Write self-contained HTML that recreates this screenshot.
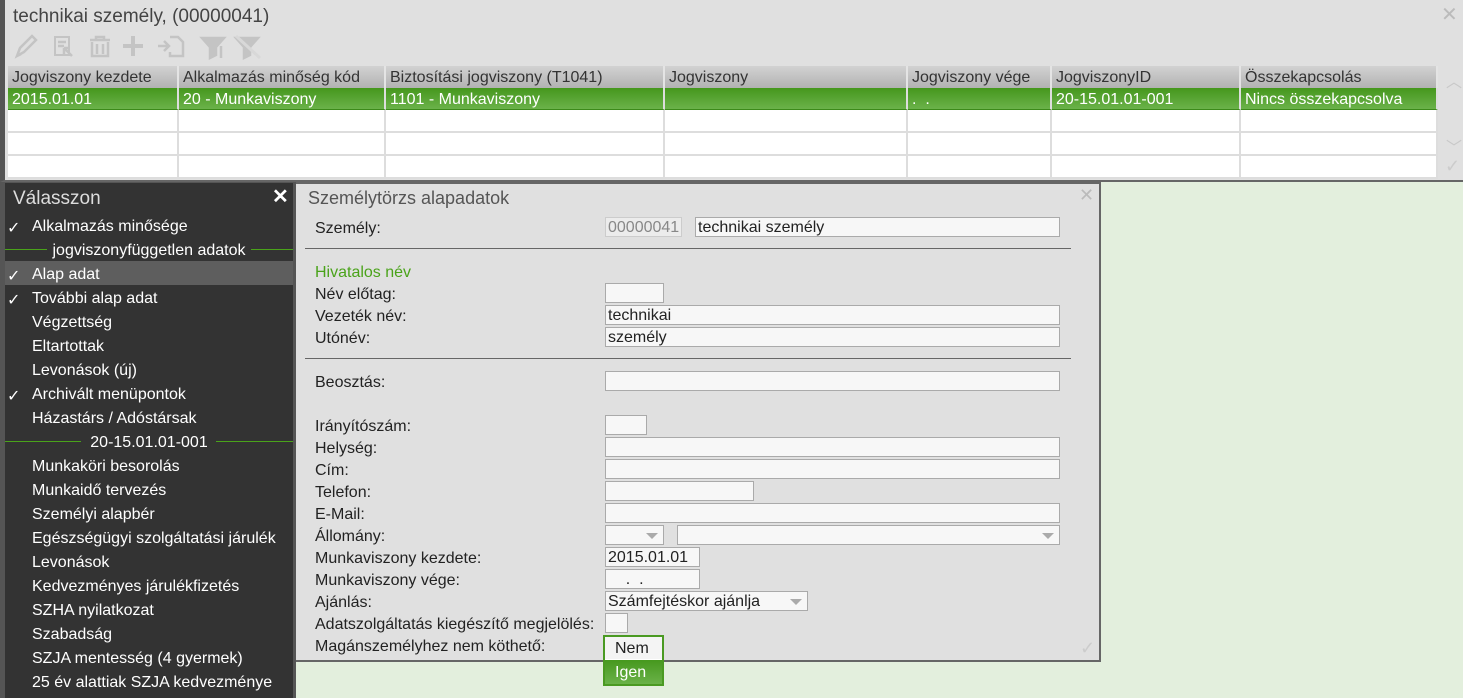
<!DOCTYPE html>
<html><head><meta charset="utf-8"><style>
*{margin:0;padding:0;box-sizing:border-box}
body{width:1463px;height:698px;overflow:hidden;background:#e3efdd;font-family:"Liberation Sans",sans-serif;font-size:16px;position:relative}
.a{position:absolute;white-space:nowrap}
#top{left:0;top:0;width:1463px;height:182px;background:#e0e0e0;border-left:5px solid #555;border-bottom:2px solid #666}
.hd{top:66px;height:22px;background:linear-gradient(#d2d2d2,#b2b2b2);color:#333;line-height:24px;padding-left:4px;border-right:2px solid #e4e4e4}
.rw{top:88px;height:22px;background:linear-gradient(#45971d,#6bb24a);color:#fff;line-height:24px;padding-left:4px;border-right:2px solid #ddd;border-bottom:1px solid #3c8a1a}
.em{height:23px;background:#fff;border-right:2px solid #ddd;border-bottom:2px solid #ddd}
#menu{left:0;top:182px;width:296px;height:516px;background:#555}
#mi{left:5px;top:1px;width:288px;height:515px;background:#333}
.mt{left:32px;color:#fff;font-size:16px;padding-top:2px}
.ck{left:7px;color:#fff;font-size:16px;padding-top:2px}
.sep{left:5px;width:288px;color:#fff;text-align:center;font-size:16px;padding-top:2px}
.gl{height:1px;background:#4aa31a}
#form{left:296px;top:182px;width:805px;height:480px;background:#e0e0e0;border:2px solid #666;border-left:none}
.lb{left:315px;color:#222;font-size:16px;padding-top:2px}
.in{background:#f7f7f7;border:1px solid #aaa;height:20px;font-size:16px;line-height:20px;padding-left:2px;color:#222}
.ar{position:absolute;right:5px;top:7px;width:0;height:0;border-left:6px solid transparent;border-right:6px solid transparent;border-top:6px solid #aaa}
</style></head><body>
<div id="top" class="a">
<div class="a" style="left:8px;top:6px;font-size:19px;color:#444">technikai személy, (00000041)</div>
<div class="a" style="left:1436px;top:2px;font-size:20px;color:#bbb">✕</div>
<svg class="a" style="left:5px;top:32px" width="260" height="28" viewBox="0 0 260 28" fill="none" stroke="#c4c4c4" stroke-width="2.5">
<path d="M7 24 L10 16 L22 4 L26 8 L14 20 Z M7 24 L11 22"/>
<rect x="45" y="5" width="14" height="18" stroke-width="2"/><path d="M48 10h8M48 14h6M54 16l8 8M54 16v6M54 16h6" />
<path d="M80 8h20M86 8v-3h8v3M82 10v14h16v-14M87 12v10M93 12v10"/>
<path d="M123 4v20M113 14h20" stroke-width="4"/>
<path d="M148 14h10M154 9l5 5-5 5M160 5h8l5 5v14h-13v-4"/>
<path d="M192 6h22l-8 9v8l-6 3v-11z" fill="#c4c4c4"/><path d="M211 14v12"/>
<path d="M226 6h22l-8 9v8l-6 3v-11z" fill="#c4c4c4"/><path d="M226 4l24 22" stroke="#d8d8d8" stroke-width="3"/>
</svg>
<div class="a hd" style="left:3px;width:171px">Jogviszony kezdete</div>
<div class="a hd" style="left:174px;width:207px">Alkalmazás minőség kód</div>
<div class="a hd" style="left:381px;width:279px">Biztosítási jogviszony (T1041)</div>
<div class="a hd" style="left:660px;width:243px">Jogviszony</div>
<div class="a hd" style="left:903px;width:144px">Jogviszony vége</div>
<div class="a hd" style="left:1047px;width:189px">JogviszonyID</div>
<div class="a hd" style="left:1236px;width:197px">Összekapcsolás</div>
<div class="a rw" style="left:3px;width:171px">2015.01.01</div>
<div class="a rw" style="left:174px;width:207px">20 - Munkaviszony</div>
<div class="a rw" style="left:381px;width:279px">1101 - Munkaviszony</div>
<div class="a rw" style="left:660px;width:243px"></div>
<div class="a rw" style="left:903px;width:144px">.&nbsp;&nbsp;.</div>
<div class="a rw" style="left:1047px;width:189px">20-15.01.01-001</div>
<div class="a rw" style="left:1236px;width:197px">Nincs összekapcsolva</div>
<div class="a" style="left:3px;top:110px">
<div style="display:flex"><div class="em" style="width:171px"></div><div class="em" style="width:207px"></div><div class="em" style="width:279px"></div><div class="em" style="width:243px"></div><div class="em" style="width:144px"></div><div class="em" style="width:189px"></div><div class="em" style="width:197px"></div></div>
<div style="display:flex"><div class="em" style="width:171px"></div><div class="em" style="width:207px"></div><div class="em" style="width:279px"></div><div class="em" style="width:243px"></div><div class="em" style="width:144px"></div><div class="em" style="width:189px"></div><div class="em" style="width:197px"></div></div>
<div style="display:flex"><div class="em" style="width:171px"></div><div class="em" style="width:207px"></div><div class="em" style="width:279px"></div><div class="em" style="width:243px"></div><div class="em" style="width:144px"></div><div class="em" style="width:189px"></div><div class="em" style="width:197px"></div></div>
</div>
<div class="a" style="left:1441px;top:68px;color:#c8c8c8;font-size:16px">︿</div>
<div class="a" style="left:1441px;top:134px;color:#c8c8c8;font-size:16px">﹀</div>
<div class="a" style="left:1440px;top:156px;color:#ccc;font-size:18px">✓</div>
</div>

<div id="menu" class="a"><div id="mi" class="a"></div></div>
<div class="a" style="left:13px;top:188px;font-size:19px;color:#ddd">Válasszon</div>
<div class="a" style="left:272px;top:184px;font-size:20px;color:#fff;font-weight:bold">✕</div>
<div class="a" style="left:5px;top:261px;width:288px;height:24px;background:#5e5e5e"></div>
<div class="a gl" style="left:5px;top:249px;width:42px"></div><div class="a gl" style="left:251px;top:249px;width:42px"></div>
<div class="a gl" style="left:5px;top:441px;width:76px"></div><div class="a gl" style="left:216px;top:441px;width:77px"></div>
<div class="a ck" style="top:216px">✓</div><div class="a mt" style="top:216px">Alkalmazás minősége</div>
<div class="a sep" style="top:240px">jogviszonyfüggetlen adatok</div>
<div class="a ck" style="top:264px">✓</div><div class="a mt" style="top:264px">Alap adat</div>
<div class="a ck" style="top:288px">✓</div><div class="a mt" style="top:288px">További alap adat</div>
<div class="a mt" style="top:312px">Végzettség</div>
<div class="a mt" style="top:336px">Eltartottak</div>
<div class="a mt" style="top:360px">Levonások (új)</div>
<div class="a ck" style="top:384px">✓</div><div class="a mt" style="top:384px">Archivált menüpontok</div>
<div class="a mt" style="top:408px">Házastárs / Adóstársak</div>
<div class="a sep" style="top:432px">20-15.01.01-001</div>
<div class="a mt" style="top:456px">Munkaköri besorolás</div>
<div class="a mt" style="top:480px">Munkaidő tervezés</div>
<div class="a mt" style="top:504px">Személyi alapbér</div>
<div class="a mt" style="top:528px">Egészségügyi szolgáltatási járulék</div>
<div class="a mt" style="top:552px">Levonások</div>
<div class="a mt" style="top:576px">Kedvezményes járulékfizetés</div>
<div class="a mt" style="top:600px">SZHA nyilatkozat</div>
<div class="a mt" style="top:624px">Szabadság</div>
<div class="a mt" style="top:648px">SZJA mentesség (4 gyermek)</div>
<div class="a mt" style="top:672px">25 év alattiak SZJA kedvezménye</div>

<div id="form" class="a"></div>
<div class="a" style="left:308px;top:188px;font-size:18px;color:#555">Személytörzs alapadatok</div>
<div class="a" style="left:1079px;top:185px;font-size:18px;color:#bbb">✕</div>
<div class="a" style="left:1080px;top:638px;font-size:18px;color:#ccc">✓</div>
<div class="a" style="left:305px;top:248px;width:766px;height:1px;background:#666"></div>
<div class="a" style="left:305px;top:358px;width:766px;height:1px;background:#666"></div>
<div class="a lb" style="top:218px">Személy:</div>
<div class="a in" style="left:605px;top:217px;width:77px;color:#888;background:#ececec;border-color:#ccc">00000041</div>
<div class="a in" style="left:695px;top:217px;width:365px">technikai személy</div>
<div class="a" style="left:315px;top:264px;color:#4aa31a">Hivatalos név</div>
<div class="a lb" style="top:284px">Név előtag:</div><div class="a in" style="left:605px;top:283px;width:59px"></div>
<div class="a lb" style="top:306px">Vezeték név:</div><div class="a in" style="left:605px;top:305px;width:455px">technikai</div>
<div class="a lb" style="top:328px">Utónév:</div><div class="a in" style="left:605px;top:327px;width:455px">személy</div>
<div class="a lb" style="top:372px">Beosztás:</div><div class="a in" style="left:605px;top:371px;width:455px"></div>
<div class="a lb" style="top:416px">Irányítószám:</div><div class="a in" style="left:605px;top:415px;width:42px"></div>
<div class="a lb" style="top:438px">Helység:</div><div class="a in" style="left:605px;top:437px;width:455px"></div>
<div class="a lb" style="top:460px">Cím:</div><div class="a in" style="left:605px;top:459px;width:455px"></div>
<div class="a lb" style="top:482px">Telefon:</div><div class="a in" style="left:605px;top:481px;width:149px"></div>
<div class="a lb" style="top:504px">E-Mail:</div><div class="a in" style="left:605px;top:503px;width:455px"></div>
<div class="a lb" style="top:526px">Állomány:</div><div class="a in" style="left:605px;top:525px;width:59px"><span class="ar"></span></div><div class="a in" style="left:677px;top:525px;width:383px"><span class="ar"></span></div>
<div class="a lb" style="top:548px">Munkaviszony kezdete:</div><div class="a in" style="left:605px;top:547px;width:95px">2015.01.01</div>
<div class="a lb" style="top:570px">Munkaviszony vége:</div><div class="a in" style="left:605px;top:569px;width:95px">&nbsp;&nbsp;&nbsp;&nbsp;.&nbsp;&nbsp;.</div>
<div class="a lb" style="top:592px">Ajánlás:</div><div class="a in" style="left:605px;top:591px;width:203px">Számfejtéskor ajánlja<span class="ar"></span></div>
<div class="a lb" style="top:614px">Adatszolgáltatás kiegészítő megjelölés:</div><div class="a in" style="left:605px;top:613px;width:23px"></div>
<div class="a lb" style="top:636px">Magánszemélyhez nem köthető:</div>
<div class="a" style="left:603px;top:635px;width:61px;height:51px;background:#fff;border:2px solid #4a9a22"></div>
<div class="a" style="left:605px;top:637px;width:57px;height:22px;background:#f4f4f4;color:#222;padding-left:10px;line-height:24px">Nem</div>
<div class="a" style="left:605px;top:660px;width:57px;height:24px;background:linear-gradient(#46981e,#6ab248);color:#fff;padding-left:10px;line-height:26px">Igen</div>
</body></html>
